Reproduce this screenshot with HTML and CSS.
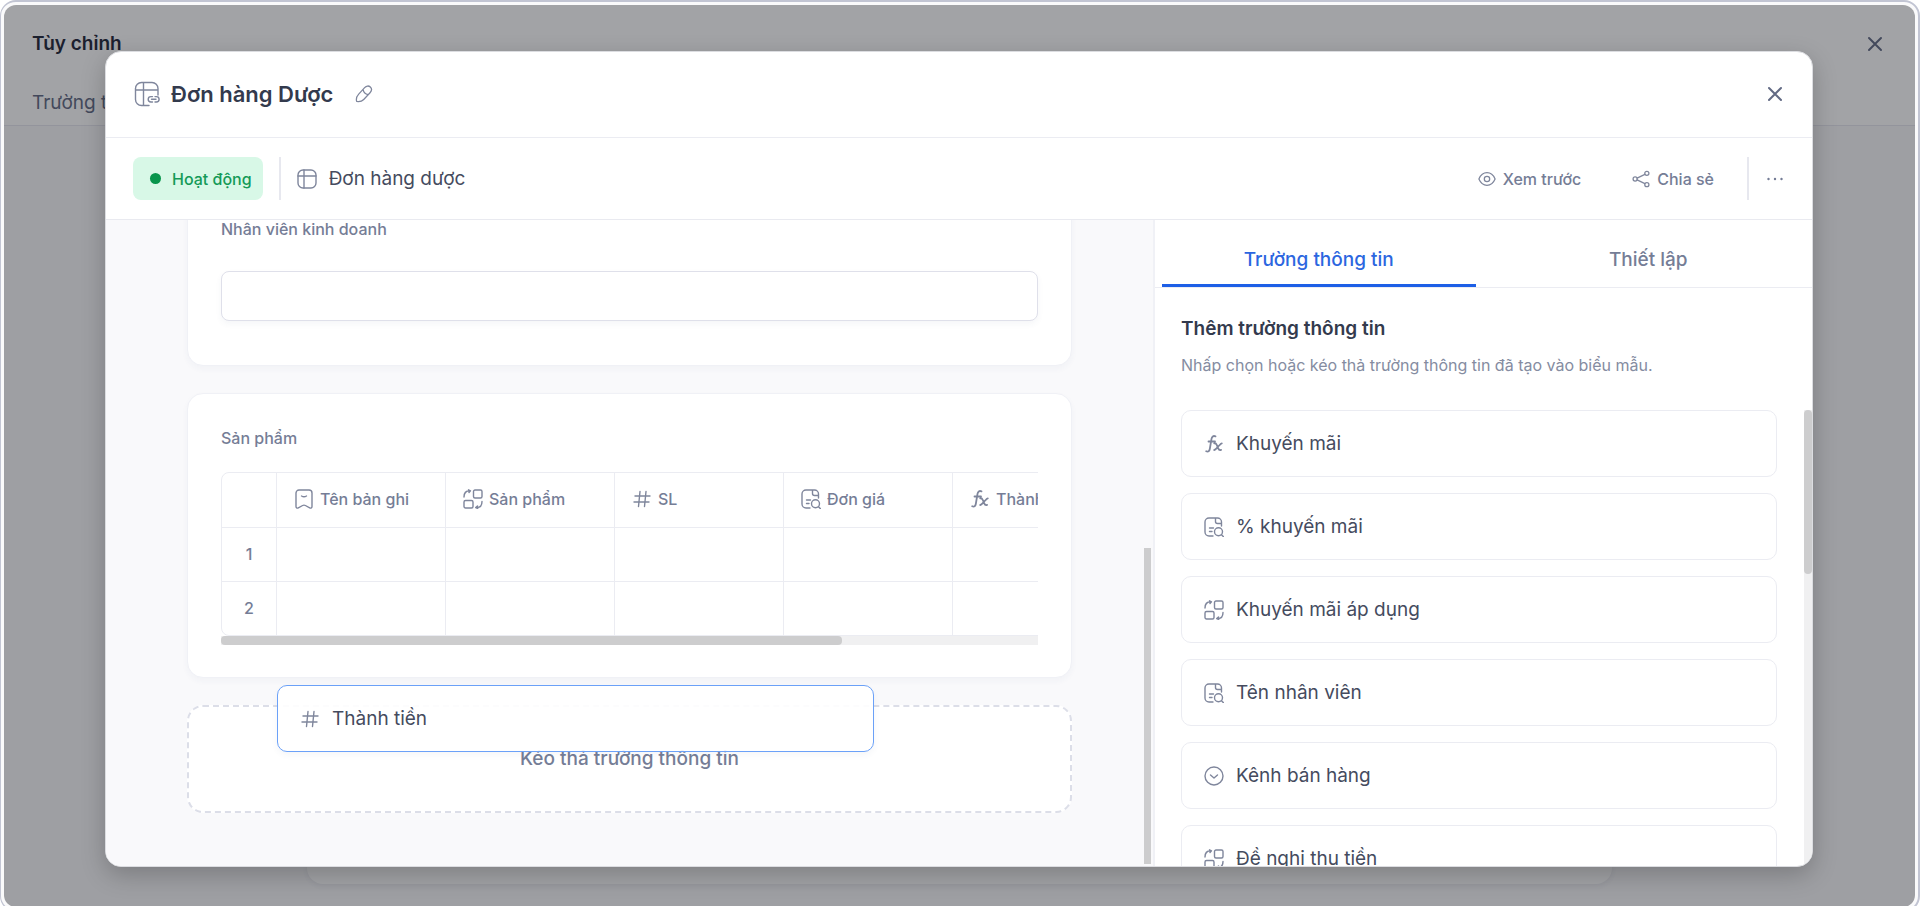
FILE: index.html
```html
<!DOCTYPE html>
<html lang="vi">
<head>
<meta charset="utf-8">
<meta name="viewport" content="width=device-width, initial-scale=1">
<title>Đơn hàng Dược</title>
<link rel="stylesheet" href="styles.css">
</head>
<body>
<svg class="sprite" aria-hidden="true">
  <symbol id="i-hash" viewBox="0 0 20 20"><path d="M3 7h15M2 13h15M8 2.500 6.500 17.500M14 2.500 12.500 17.500"/></symbol>
  <symbol id="i-fx" viewBox="0 0 20 20"><path stroke-width="1.800" d="M11.500 2.300c-2.300-.9-3.600.3-4 2.600L5.800 15c-.4 2.300-1.600 3.200-3.600 2.300M4.500 7.500h6.500M10.200 9.300c1.500-.4 2 .3 2.600 1.700l1.400 3.400c.6 1.500 1.400 2 2.900 1.500M17.800 9.300c-1.500 0-5.800 6.700-7.600 6.700"/></symbol>
  <symbol id="i-lookup" viewBox="0 0 20 20"><path d="M9 19H5a4 4 0 0 1-4-4V5a4 4 0 0 1 4-4h8.500a4 4 0 0 1 4 4v4M11.500 1v3.500a2 2 0 0 0 2 2h4M5.500 11h4M5.500 14.500h2.500"/><circle cx="14.500" cy="14.800" r="4"/><path d="m17.500 17.800 2 2"/></symbol>
  <symbol id="i-link" viewBox="0 0 20 20"><rect x="10.500" y="1" width="8.500" height="8" rx="1.500"/><rect x="1" y="11.500" width="9" height="7.500" rx="1.500"/><path d="M1 8c0-3.800 2-6.200 5.500-6.200M5.500.8l2 1-1.500 1.700M19 12.500c0 3.600-1.800 6-5 6M14.500 17l-1.800 1.500 2 1"/></symbol>
  <symbol id="i-bookmark" viewBox="0 0 20 20"><path d="M5 1h10a3 3 0 0 1 3 3v13.500c0 1.500-1 2-2.300 1.300l-4.300-2.300a3 3 0 0 0-2.800 0l-4.300 2.300C3 19.500 2 19 2 17.500V4a3 3 0 0 1 3-3zM7.500 7c1.500.9 3.500.9 5 0"/></symbol>
  <symbol id="i-choice" viewBox="0 0 20 20"><circle cx="10" cy="10" r="9"/><path d="m6.500 9 3.500 3 3.500-3"/></symbol>
  <symbol id="i-table" viewBox="0 0 20 20"><rect x="1" y="1" width="18" height="18" rx="5"/><path d="M1 7h18M7 1v18"/></symbol>
  <symbol id="i-table-link" viewBox="0 0 26 26"><path d="M15 24.500H7.500a6 6 0 0 1-6-6V7.500a6 6 0 0 1 6-6H18a6 6 0 0 1 6 6V14M1.500 9H24M9.500 1.500v23"/><path d="M18.500 21h-1.600a2.700 2.700 0 0 1 0-5.400h1.600M21 15.600h1.400a2.700 2.700 0 0 1 0 5.400H21M17.500 18.300h4.500"/></symbol>
  <symbol id="i-pencil" viewBox="0 0 20 20"><path d="M1.800 18.300c-.7-3 .2-6 2.300-8.200l6.600-7.200c2-2.200 4.600-2.300 6.300-.7 1.800 1.700 1.700 4.200-.3 6.400l-7 7.500c-2.200 2.300-4.700 2.700-7.900 2.200zM9 5.200c.6 3 2.500 5 5.500 5.500"/></symbol>
  <symbol id="i-eye" viewBox="0 0 20 20"><path d="M1 10c2-4.700 5.200-7 9-7s7 2.300 9 7c-2 4.700-5.200 7-9 7s-7-2.300-9-7z"/><circle cx="10" cy="10" r="3"/></symbol>
  <symbol id="i-share" viewBox="0 0 20 20"><circle cx="3.500" cy="10" r="2.300"/><circle cx="16.500" cy="3.700" r="2.300"/><circle cx="16.500" cy="16.300" r="2.300"/><path d="m5.700 9 8.600-4.200M5.700 11l8.600 4.200"/></symbol>
  <symbol id="i-close" viewBox="0 0 20 20"><path d="m4 4 12 12M16 4 4 16"/></symbol>
  <symbol id="i-more" viewBox="0 0 20 20"><path d="M3.500 10h.01M10 10h.01M16.500 10h.01"/></symbol>
</svg>

<div class="frame">
  <div class="page">
    <header class="page-head">
      <div class="page-title-row">
        <h1 class="page-title">Tùy chỉnh</h1>
        <button class="icon-button" type="button" aria-label="Đóng trang"><svg class="icon icon-bold"><use href="#i-close"/></svg></button>
      </div>
      <a class="page-tab" href="#fields">Trường t</a>
    </header>
    <div class="page-body"><div class="page-card"></div></div>

    <div class="overlay">
      <section class="modal" role="dialog" aria-labelledby="modal-title">
        <header class="modal-head">
          <svg class="icon icon-large"><use href="#i-table-link"/></svg>
          <h2 class="modal-title" id="modal-title">Đơn hàng Dược</h2>
          <button class="icon-button" type="button" aria-label="Đổi tên"><svg class="icon icon-small"><use href="#i-pencil"/></svg></button>
          <button class="icon-button push-right" type="button" aria-label="Đóng"><svg class="icon icon-bold"><use href="#i-close"/></svg></button>
        </header>

        <div class="toolbar">
          <button class="status" type="button"><span class="status-dot"></span>Hoạt động</button>
          <span class="divider"></span>
          <a class="source" href="#source"><svg class="icon"><use href="#i-table"/></svg>Đơn hàng dược</a>
          <div class="actions">
            <button class="action" type="button"><svg class="icon icon-small"><use href="#i-eye"/></svg>Xem trước</button>
            <button class="action" type="button"><svg class="icon icon-small"><use href="#i-share"/></svg>Chia sẻ</button>
            <span class="divider"></span>
            <button class="icon-button" type="button" aria-label="Thêm thao tác"><svg class="icon icon-dots"><use href="#i-more"/></svg></button>
          </div>
        </div>

        <div class="workspace">
          <main class="canvas">
            <section class="card">
              <label class="label" for="staff">Nhân viên kinh doanh</label>
              <input class="field" id="staff" type="text">
            </section>

            <section class="card">
              <h3 class="label">Sản phẩm</h3>
              <div class="table-clip">
                <table class="grid">
                  <thead>
                    <tr>
                      <th class="index"></th>
                      <th><span class="column"><svg class="icon"><use href="#i-bookmark"/></svg>Tên bản ghi</span></th>
                      <th><span class="column"><svg class="icon"><use href="#i-link"/></svg>Sản phẩm</span></th>
                      <th><span class="column"><svg class="icon"><use href="#i-hash"/></svg>SL</span></th>
                      <th><span class="column"><svg class="icon"><use href="#i-lookup"/></svg>Đơn giá</span></th>
                      <th><span class="column"><svg class="icon"><use href="#i-fx"/></svg>Thành tiền</span></th>
                    </tr>
                  </thead>
                  <tbody>
                    <tr><td class="index">1</td><td></td><td></td><td></td><td></td><td></td></tr>
                    <tr><td class="index">2</td><td></td><td></td><td></td><td></td><td></td></tr>
                  </tbody>
                </table>
              </div>
              <div class="scroll-x"><div class="thumb-x"></div></div>
            </section>

            <div class="dropzone">
              <span class="drop-text">Kéo thả trường thông tin</span>
              <button class="item dragged" type="button"><svg class="icon"><use href="#i-hash"/></svg>Thành tiền</button>
            </div>
          </main>
          <div class="canvas-scroll"><div class="thumb-y"></div></div>

          <aside class="side">
            <nav class="tabs">
              <button class="tab active" type="button">Trường thông tin</button>
              <button class="tab" type="button">Thiết lập</button>
            </nav>
            <div class="side-intro">
              <h3 class="side-title">Thêm trường thông tin</h3>
              <p class="side-text">Nhấp chọn hoặc kéo thả trường thông tin đã tạo vào biểu mẫu.</p>
            </div>
            <div class="picker">
              <div class="items">
                <button class="item" type="button"><svg class="icon"><use href="#i-fx"/></svg>Khuyến mãi</button>
                <button class="item" type="button"><svg class="icon"><use href="#i-lookup"/></svg>% khuyến mãi</button>
                <button class="item" type="button"><svg class="icon"><use href="#i-link"/></svg>Khuyến mãi áp dụng</button>
                <button class="item" type="button"><svg class="icon"><use href="#i-lookup"/></svg>Tên nhân viên</button>
                <button class="item" type="button"><svg class="icon"><use href="#i-choice"/></svg>Kênh bán hàng</button>
                <button class="item" type="button"><svg class="icon"><use href="#i-link"/></svg>Đề nghị thu tiền</button>
              </div>
              <div class="scroll-y"><div class="thumb-y"></div></div>
            </div>
          </aside>
        </div>
      </section>
    </div>
  </div>
</div>
</body>
</html>
```
FILE: styles.css
```css
:root {
  --ink: #333a4d;
  --text: #454b5e;
  --muted: #757d96;
  --line: #ebecf2;
  --blue: #1d5fe6;
}

* { box-sizing: border-box; }

body {
  margin: 0;
  overflow: hidden;
  background: #fff;
  color: var(--text);
  font-family: Inter, "Open Sans", sans-serif;
  font-size: 16px;
  line-height: 24px;
}

h1, h2, h3, p { margin: 0; }
button { padding: 0; border: 0; background: none; color: inherit; font: inherit; }
a { color: inherit; text-decoration: none; }

.sprite { display: none; }

.icon {
  flex: none;
  width: 20px;
  height: 20px;
  fill: none;
  stroke: #7f869c;
  stroke-width: 1.4;
  stroke-linecap: round;
  stroke-linejoin: round;
}
.icon-large { width: 26px; height: 26px; }
.icon-small { width: 18px; height: 18px; }
.icon-bold { stroke: #626a84; stroke-width: 2; }
.icon-dots { stroke: #757d96; stroke-width: 2.4; }
.icon-button { display: flex; }

/* Page behind the dialog */
.frame {
  height: calc(100vh + 6px);
  padding: 3px;
  border: 2px solid #c2c5d3;
  border-left-width: 1px;
  border-radius: 16px;
  background: #fafafb;
}
.page {
  position: relative;
  display: flex;
  flex-direction: column;
  height: 100%;
  overflow: hidden;
  border-radius: 12px;
  background: #f9f9fb;
}
.page-head {
  height: 121px;
  padding: 27px 30px 0 28px;
  border-bottom: 1px solid #e6e7ee;
  background: #fff;
}
.page-title-row { display: flex; align-items: center; justify-content: space-between; }
.page-title { color: #1e2538; font-size: 19px; font-weight: 600; line-height: 24px; }
.page-tab { display: block; margin-top: 35px; color: #626a84; font-size: 19px; }
.page-body { display: flex; flex: 1; justify-content: center; padding: 0 303px 23px; }
.page-card {
  flex: 1;
  border-radius: 16px;
  background: #fff;
  box-shadow: 0 2px 6px rgba(40, 50, 90, .08);
}

.overlay {
  position: absolute;
  inset: 0;
  display: flex;
  padding: 46px 102px 40px 101px;
  background: rgba(23, 25, 32, .4);
}

/* Dialog */
.modal {
  display: flex;
  flex: 1;
  flex-direction: column;
  min-width: 0;
  overflow: hidden;
  border: 1px solid #dcdde1;
  border-radius: 16px;
  background: #fff;
  box-shadow: 0 8px 24px rgba(0, 0, 0, .22);
}
.modal-head {
  display: flex;
  flex: none;
  align-items: center;
  height: 86px;
  padding: 0 27px 2px 28px;
  border-bottom: 1px solid var(--line);
}
.modal-title { margin: 0 22px 0 11px; color: var(--ink); font-size: 22px; font-weight: 600; line-height: 32px; }
.push-right { margin-left: auto; }

.toolbar {
  display: flex;
  flex: none;
  align-items: center;
  height: 82px;
  padding: 0 27px;
  border-bottom: 1px solid #e9eaf0;
}
.status {
  display: flex;
  align-items: center;
  height: 43px;
  padding: 0 11px 0 17px;
  border-radius: 8px;
  background: #d8f8e7;
  color: #149a58;
  font-weight: 500;
}
.status-dot { width: 11px; height: 11px; margin-right: 11px; border-radius: 50%; background: #08954c; }
.divider { width: 2px; height: 43px; margin: 0 16px; background: #e7e8ef; }
.source { display: flex; align-items: center; gap: 12px; font-size: 19px; line-height: 28px; }
.actions { display: flex; align-items: center; margin-left: auto; color: var(--muted); font-weight: 500; }
.action { display: flex; align-items: center; gap: 7px; margin-right: 51px; }
.action + .divider { margin-left: 0; }
.action:has(+ .divider) { margin-right: 33px; }

.workspace {
  display: grid;
  flex: 1;
  grid-template-columns: minmax(0, 1038fr) 9px minmax(0, 659fr);
  grid-template-rows: minmax(0, 1fr);
  min-height: 0;
}

/* Form canvas */
.canvas {
  display: flex;
  flex-direction: column;
  justify-content: flex-end;
  gap: 27px;
  overflow: hidden;
  padding: 0 72px 53px 81px;
  background: #f9f9fb;
}
.card {
  flex: none;
  padding: 32px 33px;
  border: 1px solid #f0f1f6;
  border-radius: 16px;
  background: #fff;
  box-shadow: 0 3px 6px rgba(50, 70, 120, .04);
}
.label { display: block; color: var(--muted); font-size: 16px; font-weight: 500; line-height: 24px; }
.field {
  display: block;
  width: 100%;
  height: 50px;
  margin: 30px 0 12px;
  padding: 0 16px;
  border: 1px solid #dfe0ea;
  border-radius: 8px;
  box-shadow: 0 3px 6px rgba(50, 70, 120, .05);
  color: inherit;
  font: inherit;
}
.table-clip { margin-top: 22px; overflow: hidden; }
.grid {
  width: 902px;
  border: 1px solid var(--line);
  border-radius: 8px;
  border-spacing: 0;
  table-layout: fixed;
  color: var(--muted);
  font-weight: 500;
}
.grid th, .grid td { height: 54px; padding: 0 0 2px 17px; border-right: 1px solid var(--line); border-bottom: 1px solid var(--line); font-weight: 500; text-align: left; }
.grid th { height: 55px; }
.grid tr > :last-child { border-right: 0; }
.grid tbody tr:last-child td { height: 53px; border-bottom: 0; }
.grid .index { width: 55px; padding: 0 0 2px; text-align: center; }
.column { display: flex; align-items: center; gap: 6px; white-space: nowrap; }
.scroll-x { height: 9px; background: #f0f0f1; }
.thumb-x { width: 76%; height: 100%; border-radius: 4px; background: #cdcdce; }

.dropzone {
  position: relative;
  display: flex;
  flex: none;
  align-items: center;
  justify-content: center;
  height: 108px;
  border: 2px dashed #dcdee8;
  border-radius: 16px;
  background: #fff;
}
.drop-text { color: var(--muted); font-size: 19px; font-weight: 500; }
.canvas-scroll { display: flex; align-items: flex-end; padding: 0 2px 2px 0; background: #f9f9fb; }
.canvas-scroll .thumb-y { width: 100%; height: 49%; border-radius: 0; }

.item {
  display: flex;
  flex: none;
  align-items: center;
  gap: 12px;
  height: 67px;
  padding: 0 22px;
  border: 1px solid var(--line);
  border-radius: 10px;
  background: #fff;
  font-size: 19px;
  text-align: left;
}
.dragged {
  position: absolute;
  top: -22px;
  left: 88px;
  width: 597px;
  border-color: #6ba1f8;
  background: rgba(255, 255, 255, .9);
  box-shadow: 0 3px 6px rgba(50, 70, 120, .05);
}

/* Field picker */
.side {
  display: flex;
  flex-direction: column;
  min-width: 0;
  border-left: 2px solid #f0f1f6;
}
.tabs { display: flex; flex: none; gap: 16px; height: 68px; padding: 0 7px; border-bottom: 1px solid var(--line); }
.tab { flex: 1; padding-top: 16px; border-bottom: 3px solid transparent; color: var(--muted); font-size: 19px; font-weight: 500; }
.tab.active { border-color: var(--blue); color: #2c66e0; }
.side-intro { padding: 27px 26px 33px; }
.side-title { color: var(--ink); font-size: 19px; font-weight: 600; line-height: 28px; }
.side-text { margin-top: 10px; color: #858ca1; font-size: 16px; }
.picker { display: flex; flex: 1; min-height: 0; }
.items { display: flex; flex: 1; flex-direction: column; gap: 16px; overflow: hidden; padding: 0 27px 0 26px; }
.scroll-y { width: 8px; background: #f0f0f1; }
.thumb-y { height: 36%; border-radius: 4px; background: #cdcdce; }
```
